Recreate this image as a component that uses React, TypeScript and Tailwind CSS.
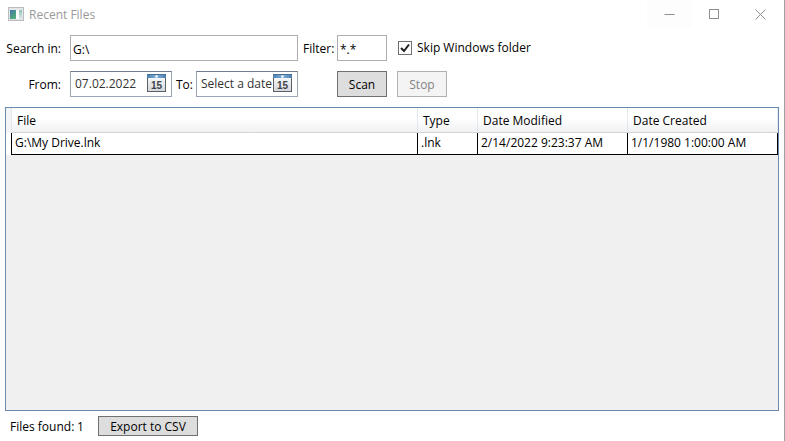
import { useState } from "react";
import type { ReactNode } from "react";

function AppIcon() {
  return (
    <svg width="16" height="14" viewBox="0 0 16 14" aria-hidden="true">
      <defs>
        <linearGradient id="pane" x1="0" y1="0" x2="0.6" y2="1">
          <stop offset="0" stopColor="#4478a8" />
          <stop offset="1" stopColor="#52ad78" />
        </linearGradient>
        <linearGradient id="side" x1="0" y1="0" x2="0" y2="1">
          <stop offset="0" stopColor="#8fc3b4" />
          <stop offset="1" stopColor="#e3e8ee" />
        </linearGradient>
      </defs>
      <rect x="0.5" y="0.5" width="15" height="13" fill="#e4e6e8" stroke="#b9bcbf" />
      <rect x="2" y="3" width="6" height="9" fill="url(#pane)" />
      <rect x="8" y="3" width="3" height="9" fill="#fbfbfb" />
      <rect x="11" y="3" width="3" height="9" fill="url(#side)" />
    </svg>
  );
}

function CalendarIcon() {
  return (
    <svg width="19" height="18" viewBox="0 0 19 18" aria-hidden="true">
      <defs>
        <linearGradient id="sheet" x1="0" y1="0" x2="0" y2="1">
          <stop offset="0" stopColor="#ffffff" />
          <stop offset="1" stopColor="#d3d6da" />
        </linearGradient>
        <linearGradient id="band" x1="0" y1="0" x2="1" y2="0">
          <stop offset="0" stopColor="#4a7fae" />
          <stop offset="0.5" stopColor="#7db0dc" />
          <stop offset="1" stopColor="#4a7fae" />
        </linearGradient>
      </defs>
      <rect x="0.5" y="0.5" width="18" height="17" fill="url(#sheet)" stroke="#5b6067" />
      <rect x="0" y="0" width="19" height="4" fill="url(#band)" />
      <rect x="0" y="0" width="19" height="1" fill="#4d6d8c" />
      <circle cx="9.5" cy="2.500" r="1.2" fill="#ffffff" />
      <text
        x="9.5"
        y="15"
        textAnchor="middle"
        className="fill-[#3f444b] font-['Liberation_Sans',sans-serif] text-[10px] font-bold"
      >
        15
      </text>
    </svg>
  );
}

function DateField({ id, value, placeholder }: { id: string; value?: string; placeholder?: string }) {
  return (
    <div className="flex h-[26px] w-[102px] items-start border border-[#9aa5b8] border-t-[#6f7f8f] pt-0.5 pr-[5px] pl-1">
      <input
        id={id}
        type="text"
        defaultValue={value}
        placeholder={placeholder}
        className="h-[18px] w-0 flex-1 text-[#333333] outline-none placeholder:text-[#333333]"
      />
      <button type="button" aria-label="Show calendar" className="shrink-0">
        <CalendarIcon />
      </button>
    </div>
  );
}

function CaptionButton({ label, children, className = "" }: { label: string; children: ReactNode; className?: string }) {
  return (
    <button type="button" aria-label={label} className={`flex h-7 items-center justify-center ${className}`}>
      <svg width="11" height="11" viewBox="0 0 11 11" fill="none" stroke="#8f8f8f" aria-hidden="true">
        {children}
      </svg>
    </button>
  );
}

const columns = ["File", "Type", "Date Modified", "Date Created"];
const files = [["G:\\My Drive.lnk", ".lnk", "2/14/2022 9:23:37 AM", "1/1/1980 1:00:00 AM"]];

export default function App() {
  const [skip, setSkip] = useState(true);

  return (
    <div className="flex min-h-screen flex-col border-r border-[#a0a0a0] bg-white font-['Segoe_UI','Open_Sans',sans-serif] text-xs leading-4 whitespace-nowrap text-black">
      <header className="flex h-7 items-center pl-2">
        <AppIcon />
        <h1 className="ml-[5px] flex-1 pt-0.5 text-[#999999]">Recent Files</h1>
        <CaptionButton label="Minimize" className="w-[45px] bg-[#fdfdfd]">
          <path d="M0.5 5.5h10" />
        </CaptionButton>
        <CaptionButton label="Maximize" className="w-[45px]">
          <rect x="0.5" y="0.5" width="9" height="9" />
        </CaptionButton>
        <CaptionButton label="Close" className="w-[47px]">
          <path d="M0.5 0.5l10 10M10.5 0.5l-10 10" />
        </CaptionButton>
      </header>

      <form className="flex flex-col gap-[10px] pt-[7px]" onSubmit={(e) => e.preventDefault()}>
        <div className="flex h-[26px] items-center">
          <label htmlFor="search" className="w-[61px] shrink-0 pt-0.5 text-right">Search in:</label>
          <input id="search" type="text" defaultValue="G:\" className="ml-[9px] h-[26px] w-[228px] border border-[#abadb3] px-0.5 pt-0.5 outline-none" />
          <label htmlFor="filter" className="w-[39px] pt-0.5 pl-[5px]">Filter:</label>
          <input id="filter" type="text" defaultValue="*.*" className="h-[26px] w-[50px] border border-[#abadb3] px-0.5 pt-0.5 outline-none" />
          <label className="ml-[11px] flex items-center gap-[5px]">
            <span className="grid">
              <input
                type="checkbox"
                checked={skip}
                onChange={(e) => setSkip(e.target.checked)}
                className="peer col-start-1 row-start-1 size-[14px] appearance-none border border-[#707070] bg-white"
              />
              <svg viewBox="0 0 14 14" className="pointer-events-none invisible col-start-1 row-start-1 size-[14px] peer-checked:visible" aria-hidden="true">
                <path d="M3 7l3 3l5-6.5" fill="none" stroke="#212121" strokeWidth="2" />
              </svg>
            </span>
            Skip Windows folder
          </label>
        </div>
        <div className="flex h-[26px] items-center">
          <label htmlFor="from" className="mr-[9px] w-[61px] shrink-0 pt-0.5 text-right">From:</label>
          <DateField id="from" value="07.02.2022" />
          <label htmlFor="to" className="w-6 pt-0.5 pl-1">To:</label>
          <DateField id="to" placeholder="Select a date" />
          <button type="submit" className="ml-[39px] h-[26px] w-[50px] border border-[#707070] bg-[#dddddd] pt-0.5">Scan</button>
          <button type="button" disabled className="ml-[10px] h-[26px] w-[50px] border border-[#adb2b5] bg-[#f4f4f4] pt-0.5 text-[#838383]">Stop</button>
        </div>
      </form>

      <main className="mx-[5px] mt-[10px] flex-1 border border-[#688caf] bg-[#f0f0f0]">
        <table className="w-full table-fixed border-separate border-spacing-0 text-left">
          <colgroup>
            <col className="w-[6px]" />
            <col />
            <col className="w-[60px]" />
            <col className="w-[150px]" />
            <col className="w-[150px]" />
          </colgroup>
          <thead>
            <tr className="h-[25px]">
              <td className="border-r border-[#e3e6ea] bg-[#f4f5f7] p-0" />
              {columns.map((name) => (
                <th key={name} scope="col" className="border-r border-b border-r-[#e3e8ee] border-b-[#d5d5d5] bg-linear-to-b from-white from-45% to-[#f0f1f3] pt-0.5 pr-0 pb-0 pl-[5px] font-normal">
                  {name}
                </th>
              ))}
            </tr>
          </thead>
          <tbody>
            {files.map((file) => (
              <tr key={file[0]} className="h-[22px]">
                <td className="border-r border-black bg-white p-0" />
                {file.map((cell) => (
                  <td key={cell} className="border-r border-b border-black bg-white pt-0 pr-0 pb-0.5 pl-[3px]">
                    {cell}
                  </td>
                ))}
              </tr>
            ))}
          </tbody>
        </table>
      </main>

      <footer className="flex items-center py-[5px] pl-[10px]">
        <span className="w-[67px] pt-0.5">Files found:</span>
        <output className="w-[21px] pt-0.5">1</output>
        <button type="button" className="h-5 w-[100px] border border-[#707070] bg-[#dddddd] pt-0.5">Export to CSV</button>
      </footer>
    </div>
  );
}
